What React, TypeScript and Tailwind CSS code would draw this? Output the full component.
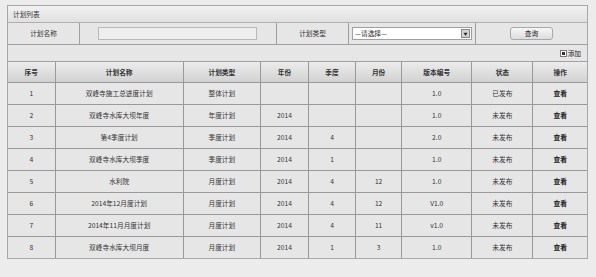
const rows = [
  { no: "1", name: "双峰寺施工总进度计划", type: "整体计划", year: "", quarter: "", month: "", ver: "1.0", status: "已发布" },
  { no: "2", name: "双峰寺水库大坝年度", type: "年度计划", year: "2014", quarter: "", month: "", ver: "1.0", status: "未发布" },
  { no: "3", name: "第4季度计划", type: "季度计划", year: "2014", quarter: "4", month: "", ver: "2.0", status: "未发布" },
  { no: "4", name: "双峰寺水库大坝季度", type: "季度计划", year: "2014", quarter: "1", month: "", ver: "1.0", status: "未发布" },
  { no: "5", name: "水利院", type: "月度计划", year: "2014", quarter: "4", month: "12", ver: "1.0", status: "未发布" },
  { no: "6", name: "2014年12月度计划", type: "月度计划", year: "2014", quarter: "4", month: "12", ver: "V1.0", status: "未发布" },
  { no: "7", name: "2014年11月月度计划", type: "月度计划", year: "2014", quarter: "4", month: "11", ver: "v1.0", status: "未发布" },
  { no: "8", name: "双峰寺水库大坝月度", type: "月度计划", year: "2014", quarter: "1", month: "3", ver: "1.0", status: "未发布" },
];

const headers = ["序号", "计划名称", "计划类型", "年份", "季度", "月份", "版本编号", "状态", "操作"];
const widths = ["w-[47px]", "w-[128px]", "w-[77px]", "w-[48px]", "w-[47px]", "w-[46px]", "w-[70px]", "w-[61px]", "w-[54px]"];

export default function App() {
  return (
    <div
      className="w-[596px] h-[277px] bg-[#ececec] pt-[5px] pl-[7px] text-[6.7px] text-[#333]"
      style={{ fontFamily: '"Noto Sans CJK SC", "Noto Sans", sans-serif' }}
    >
      <div className="w-[581px] border border-[#a8a8a8] bg-[#e6e6e6]">
        {/* title */}
        <div className="h-[17px] flex items-center pl-[5px] bg-gradient-to-b from-[#f2f2f2] to-[#e0e0e0] border-b border-[#b0b0b0] text-[#333]">
          计划列表
        </div>

        {/* search row */}
        <div className="h-[22px] flex border-b border-[#a0a0a0]">
          <div className="w-[72px] flex items-center justify-center border-r border-[#a0a0a0]">计划名称</div>
          <div className="w-[197px] flex items-center pl-[18px] border-r border-[#a0a0a0]">
            <div className="w-[159px] h-[13px] bg-[#eeeeee] border border-[#b8b8b8]" />
          </div>
          <div className="w-[72px] flex items-center justify-center border-r border-[#a0a0a0]">计划类型</div>
          <div className="w-[127px] flex items-center pl-[3px] border-r border-[#a0a0a0]">
            <div className="w-[120px] h-[13px] bg-white border border-[#a0a0a0] flex items-center justify-between pl-[2px] pr-[1px]">
              <span className="text-[#222]">—请选择—</span>
              <span className="w-[9px] h-[9px] bg-[#d4d4d4] border border-[#888] flex items-center justify-center text-[4px] leading-none text-[#222]">
                ▼
              </span>
            </div>
          </div>
          <div className="flex-1 flex items-center justify-center">
            <div className="w-[43px] h-[13px] rounded-[3px] border border-[#a8a8a8] bg-gradient-to-b from-[#f6f6f6] to-[#dddddd] flex items-center justify-center text-[#222]">
              查询
            </div>
          </div>
        </div>

        {/* add row */}
        <div className="h-[17px] flex items-center justify-end pr-[6px] border-b border-[#a0a0a0]">
          <span className="w-[7px] h-[7px] border border-[#777] bg-white flex items-center justify-center mr-[1px]">
            <span className="w-[3px] h-[3px] bg-[#333]" />
          </span>
          <span className="text-[#222]">添加</span>
        </div>

        {/* table */}
        <table className="w-full table-fixed border-collapse border-hidden">
          <thead>
            <tr className="h-[20px] bg-gradient-to-b from-[#ececec] to-[#d2d2d2]">
              {headers.map((h, i) => (
                <th key={h} className={`${widths[i]} border border-[#999] font-semibold text-[#333] text-center`}>
                  {h}
                </th>
              ))}
            </tr>
          </thead>
          <tbody>
            {rows.map((r) => (
              <tr key={r.no} className="h-[22px]">
                {[r.no, r.name, r.type, r.year, r.quarter, r.month, r.ver, r.status].map((v, i) => (
                  <td key={i} className="border border-[#999] text-center">
                    {v}
                  </td>
                ))}
                <td className="border border-[#999] text-center text-[#222] font-semibold">查看</td>
              </tr>
            ))}
          </tbody>
        </table>
      </div>
    </div>
  );
}
